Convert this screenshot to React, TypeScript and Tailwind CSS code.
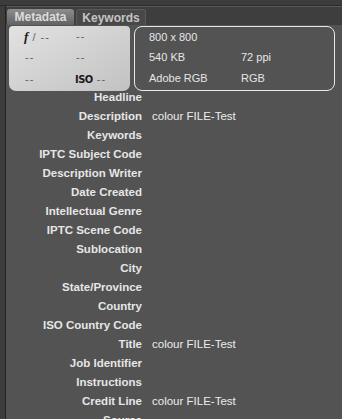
import React from "react";

const rows: [string, string][] = [
    ["Headline", ""],
    ["Description", "colour FILE-Test"],
    ["Keywords", ""],
    ["IPTC Subject Code", ""],
    ["Description Writer", ""],
    ["Date Created", ""],
    ["Intellectual Genre", ""],
    ["IPTC Scene Code", ""],
    ["Sublocation", ""],
    ["City", ""],
    ["State/Province", ""],
    ["Country", ""],
    ["ISO Country Code", ""],
    ["Title", "colour FILE-Test"],
    ["Job Identifier", ""],
    ["Instructions", ""],
    ["Credit Line", "colour FILE-Test"],
    ["Source", ""],
];

function App() {
    return (
        <div className="w-[342px] h-[419px] overflow-hidden bg-[#3a3a3a] flex flex-col font-['Liberation_Sans',Arial,sans-serif]">
            <div className="h-[6px] shrink-0 bg-[#3c3c3c] border-b border-[#2c2c2c]" />
            <div className="flex flex-1">
                <div className="w-[6px] bg-[#3d3d3d] border-r border-[#242424]" />
                <div className="flex-1 flex flex-col bg-[#535353]">
                    {/* tabs */}
                    <div className="h-[19px] shrink-0 flex items-end bg-[#3e3e3e] border-t border-[#5a5a5a] pl-[1px] gap-[2px]">
                        <div className="h-[16px] w-[67px] rounded-t-[3px] bg-gradient-to-b from-[#8e8e8e] to-[#626262] flex items-center justify-center text-[12px] font-bold text-[#dcdcdc] leading-none">
                            Metadata
                        </div>
                        <div className="h-[16px] w-[70px] rounded-t-[3px] bg-[#484848] border border-b-0 border-[#5a5a5a] flex items-center justify-center text-[12px] font-bold text-[#c4c4c4] leading-none">
                            Keywords
                        </div>
                    </div>

                    {/* info boxes */}
                    <div className="flex gap-[4px] pl-[3px] pr-[7px] pt-[1px]">
                        <div className="w-[121px] h-[65px] rounded-b-[7px] rounded-t-[4px] bg-gradient-to-br from-[#e2e2e2] to-[#c2c2c2] grid grid-cols-[52px_1fr] grid-rows-3 items-center pl-[15px] pb-[1px] text-[11px] text-[#606060] leading-none tracking-[1px]">
                            <span><i className="font-['Liberation_Serif',serif] font-bold text-[13px] text-[#1a1a1a] tracking-normal">f</i> / --</span>
                            <span>--</span>
                            <span className="pl-[1px]">--</span>
                            <span>--</span>
                            <span className="pl-[1px]">--</span>
                            <span className="-ml-[1px]"><span className="font-['DejaVu_Sans_Condensed',sans-serif] font-bold text-[11px] tracking-[-0.5px] text-[#1a1a1a]">ISO</span> --</span>
                        </div>
                        <div className="flex-1 h-[65px] rounded-[8px] border border-[#e8e8e8] grid grid-cols-[92px_1fr] grid-rows-3 items-center pl-[14px] pb-[1px] text-[11px] text-[#e6e6e6] leading-none">
                            <span>800 x 800</span>
                            <span></span>
                            <span>540 KB</span>
                            <span>72 ppi</span>
                            <span>Adobe RGB</span>
                            <span>RGB</span>
                        </div>
                    </div>

                    {/* fields */}
                    <div className="flex flex-col -mt-[3px]">
                        {rows.map(([label, value]) => (
                            <div key={label} className="h-[19px] shrink-0 flex items-center text-[11.5px] leading-none">
                                <span className="w-[136px] text-right font-bold text-[#e6e6e6] shrink-0">{label}</span>
                                <span className="pl-[10px] text-[#ececec]">{value}</span>
                            </div>
                        ))}
                    </div>
                </div>
            </div>
        </div>
    );
}

export default App;
